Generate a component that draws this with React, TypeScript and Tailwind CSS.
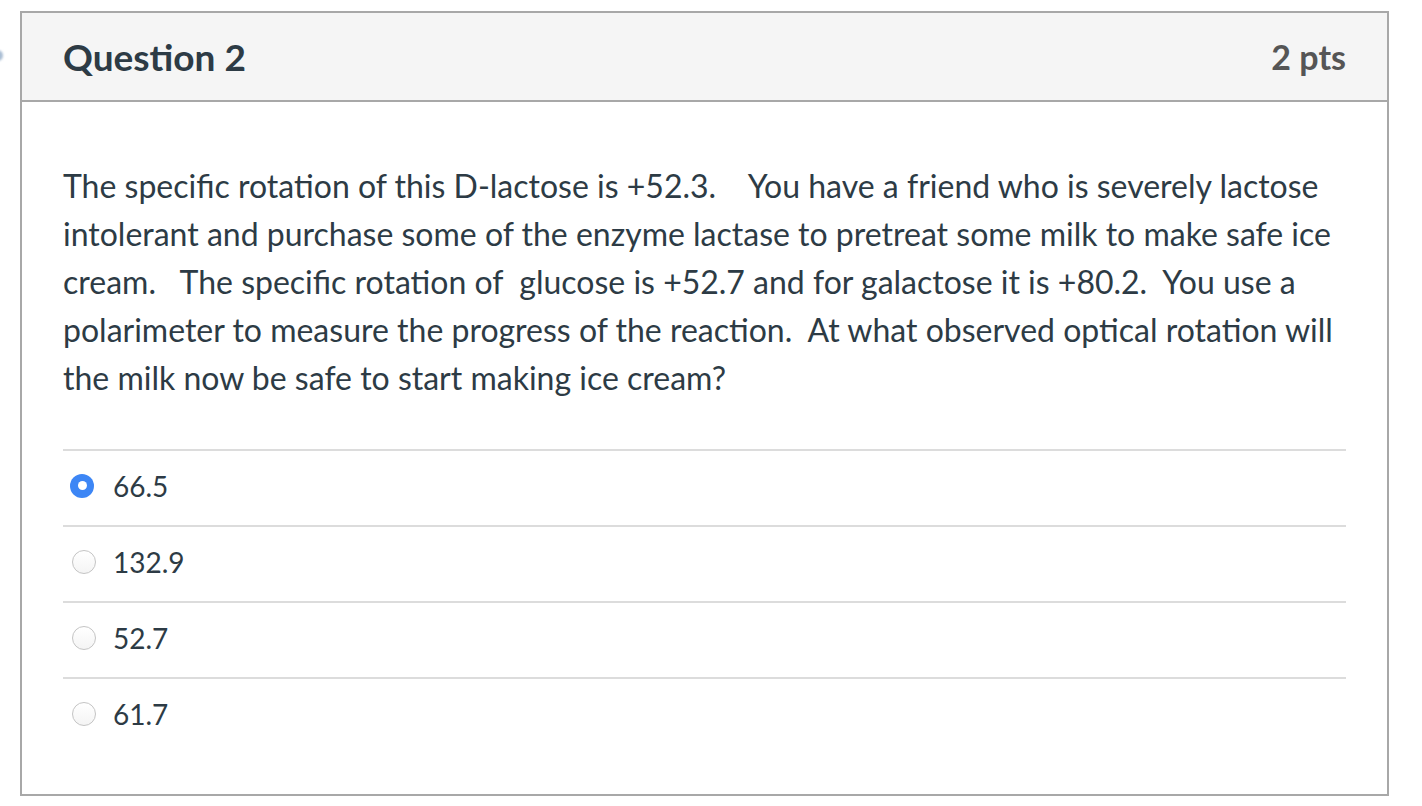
import React from "react";

const answers = [
  { label: "66.5", selected: true },
  { label: "132.9", selected: false },
  { label: "52.7", selected: false },
  { label: "61.7", selected: false },
];

export default function App() {
  return (
    <div
      className="relative w-[1422px] h-[806px] bg-white overflow-hidden"
      style={{ fontFamily: "Lato, 'Open Sans', sans-serif" }}
    >
      <div className="absolute left-[-8px] top-[50px] w-[11px] h-[11px] rounded-full bg-[#a9bdd3] blur-[1px]" />
      <div className="pt-[11px] pl-[20px]">
        <div className="w-[1369px] h-[785px] border-2 border-[#a8a8a8] flex flex-col">
          <div className="h-[89px] bg-[#f5f5f5] border-b-2 border-[#a8a8a8] flex items-center justify-between pl-[41px] pr-[41px]">
            <span className="text-[37px] font-bold text-[#2d3b45]">Question 2</span>
            <span className="text-[34px] font-bold text-[#555555]">2 pts</span>
          </div>
          <div className="px-[41px] pt-[60px]">
            <p className="text-[32px] leading-[48px] text-[#2d3b45] whitespace-pre-line">
              {"The specific rotation of this D-lactose is +52.3.\u00a0\u00a0\u00a0 You have a friend who is severely lactose\nintolerant and purchase some of the enzyme lactase to pretreat some milk to make safe ice\ncream.\u00a0\u00a0 The specific rotation of\u00a0 glucose is +52.7 and for galactose it is +80.2.\u00a0 You use a\npolarimeter to measure the progress of the reaction.\u00a0 At what observed optical rotation will\nthe milk now be safe to start making ice cream?"}
            </p>
            <div className="mt-[47px]">
              {answers.map((a) => (
                <div
                  key={a.label}
                  className="h-[76px] border-t-2 border-[#dcdcdc] flex items-center pb-[5px]"
                >
                  <div className="w-[50px] flex items-center pl-[7px]">
                    {a.selected ? (
                      <div className="w-[24px] h-[24px] rounded-full bg-[#3d86f5] flex items-center justify-center">
                        <div className="w-[9px] h-[9px] rounded-full bg-white" />
                      </div>
                    ) : (
                      <div className="w-[24px] h-[24px] rounded-full border border-[#c4c4c4] bg-gradient-to-b from-white to-[#f4f4f4] ml-[2px]" />
                    )}
                  </div>
                  <span className="text-[28px] text-[#2d3b45]">{a.label}</span>
                </div>
              ))}
            </div>
          </div>
        </div>
      </div>
    </div>
  );
}
